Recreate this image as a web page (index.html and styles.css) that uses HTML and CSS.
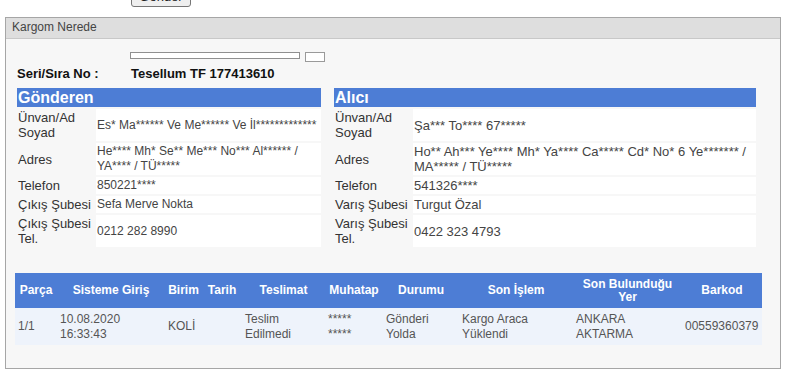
FILE: index.html
```html
<!DOCTYPE html>
<html lang="tr">
<head>
    <meta charset="UTF-8">
    <title>Kargom Nerede</title>
    <link rel="stylesheet" href="styles.css">
</head>
<body>
    <div class="top-form">
        <button type="button" class="send-btn">Gönder</button>
    </div>

    <div class="panel">
        <div class="panel-head">Kargom Nerede</div>
        <div class="panel-body">
            <div class="inputs">
                <span class="input-long"></span>
                <span class="input-short"></span>
            </div>

            <div class="serial">
                <span class="serial-label">Seri/Sıra No :</span>
                <span class="serial-value">Tesellum TF 177413610</span>
            </div>

            <div class="parties">
                <table class="info info-left">
                    <colgroup><col class="lbl-col"><col></colgroup>
                    <tr><th colspan="2">Gönderen</th></tr>
                    <tr><td class="lbl">Ünvan/Ad Soyad</td><td class="val">Es* Ma****** Ve Me****** Ve İl*************</td></tr>
                    <tr><td class="lbl">Adres</td><td class="val">He**** Mh* Se** Me*** No*** Al****** / YA**** / TÜ*****</td></tr>
                    <tr><td class="lbl">Telefon</td><td class="val">850221****</td></tr>
                    <tr><td class="lbl">Çıkış Şubesi</td><td class="val">Sefa Merve Nokta</td></tr>
                    <tr><td class="lbl">Çıkış Şubesi Tel.</td><td class="val">0212 282 8990</td></tr>
                </table>

                <table class="info info-right">
                    <colgroup><col class="lbl-col"><col></colgroup>
                    <tr><th colspan="2">Alıcı</th></tr>
                    <tr><td class="lbl">Ünvan/Ad Soyad</td><td class="val">Şa*** To**** 67*****</td></tr>
                    <tr><td class="lbl">Adres</td><td class="val">Ho** Ah*** Ye**** Mh* Ya**** Ca***** Cd* No* 6 Ye******* / MA***** / TÜ*****</td></tr>
                    <tr><td class="lbl">Telefon</td><td class="val">541326****</td></tr>
                    <tr><td class="lbl">Varış Şubesi</td><td class="val">Turgut Özal</td></tr>
                    <tr><td class="lbl">Varış Şubesi Tel.</td><td class="val">0422 323 4793</td></tr>
                </table>
            </div>

            <table class="moves">
                <colgroup>
                    <col style="width: 42px"><col style="width: 108px"><col style="width: 37px"><col style="width: 40px"><col style="width: 83px">
                    <col style="width: 58px"><col style="width: 76px"><col style="width: 114px"><col style="width: 109px"><col style="width: 80px">
                </colgroup>
                <tr>
                    <th>Parça</th>
                    <th>Sisteme Giriş</th>
                    <th>Birim</th>
                    <th>Tarih</th>
                    <th>Teslimat</th>
                    <th>Muhatap</th>
                    <th>Durumu</th>
                    <th>Son İşlem</th>
                    <th>Son Bulunduğu Yer</th>
                    <th>Barkod</th>
                </tr>
                <tr>
                    <td>1/1</td>
                    <td>10.08.2020<br>16:33:43</td>
                    <td>KOLİ</td>
                    <td></td>
                    <td>Teslim<br>Edilmedi</td>
                    <td>*****<br>*****</td>
                    <td>Gönderi<br>Yolda</td>
                    <td>Kargo Araca<br>Yüklendi</td>
                    <td>ANKARA<br>AKTARMA</td>
                    <td>00559360379</td>
                </tr>
            </table>
        </div>
    </div>
</body>
</html>
```

FILE: styles.css
```css
body {
    font-family: "Liberation Sans", Arial, sans-serif;
    margin: 0;
    background: #fff;
    color: #333;
}

.top-form {
    height: 17px;
    padding-left: 131px;
    overflow: hidden;
}

.send-btn {
    display: block;
    margin-top: -14px;
    width: 60px;
    height: 21px;
    padding: 0;
    font-family: "Liberation Sans", Arial, sans-serif;
    font-size: 13px;
    background: #efefef;
    border: 1px solid #767676;
    border-radius: 3px;
    color: #222;
}

.panel {
    width: 774px;
    height: 350px;
    margin-left: 5px;
    border: 1px solid #a6a6a6;
    background-color: #f7f7f7;
}

.panel-head {
    height: 20px;
    line-height: 18px;
    padding: 0 6px;
    font-size: 12px;
    color: #444;
    background-color: #dedede;
    border-bottom: 1px solid #c8c8c8;
}

.panel-body {
    padding: 0 10px;
}

.inputs {
    display: flex;
    align-items: flex-start;
    gap: 5px;
    padding-left: 114px;
    padding-top: 13px;
    height: 14px;
}

.input-long {
    width: 168px;
    height: 5px;
    background: #fff;
    border: 1px solid #8f8f8f;
}

.input-short {
    width: 18px;
    height: 8px;
    background: #fff;
    border: 1px solid #9a9a9a;
}

.serial {
    display: flex;
    padding-left: 1px;
    height: 22px;
    line-height: 16px;
    font-size: 13px;
    font-weight: bold;
    color: #111;
}

.serial-label {
    width: 114px;
}

.parties {
    display: flex;
    gap: 13px;
    margin-left: 1px;
    align-items: flex-start;
}

.info {
    table-layout: fixed;
    border-collapse: separate;
    border-spacing: 0 2px;
    margin-top: -2px;
    font-size: 13px;
    line-height: 15px;
}

.info .lbl-col {
    width: 79px;
}

.info-left {
    width: 304px;
}

.info-right {
    width: 422px;
}

.info th {
    background-color: #4d7dd5;
    color: #fff;
    font-size: 16px;
    line-height: 19px;
    text-align: left;
    padding: 0 1px;
}

.info td {
    padding: 1px 1px;
    vertical-align: middle;
}

.info .lbl {
    color: #333;
}

.info .val {
    background-color: #fff;
    color: #444;
}

.info-left .val {
    font-size: 12px;
}

.moves {
    margin-top: 24px;
    margin-left: -1px;
    width: 747px;
    table-layout: fixed;
    border-collapse: collapse;
    font-size: 12px;
}

.moves th {
    background-color: #4d7dd5;
    color: #fff;
    font-weight: bold;
    line-height: 13px;
    height: 35px;
    padding: 0 3px;
    text-align: center;
    vertical-align: middle;
}

.moves td {
    background-color: #eef3fb;
    color: #555;
    height: 37px;
    line-height: 15px;
    padding: 0 3px;
    vertical-align: middle;
}
```
